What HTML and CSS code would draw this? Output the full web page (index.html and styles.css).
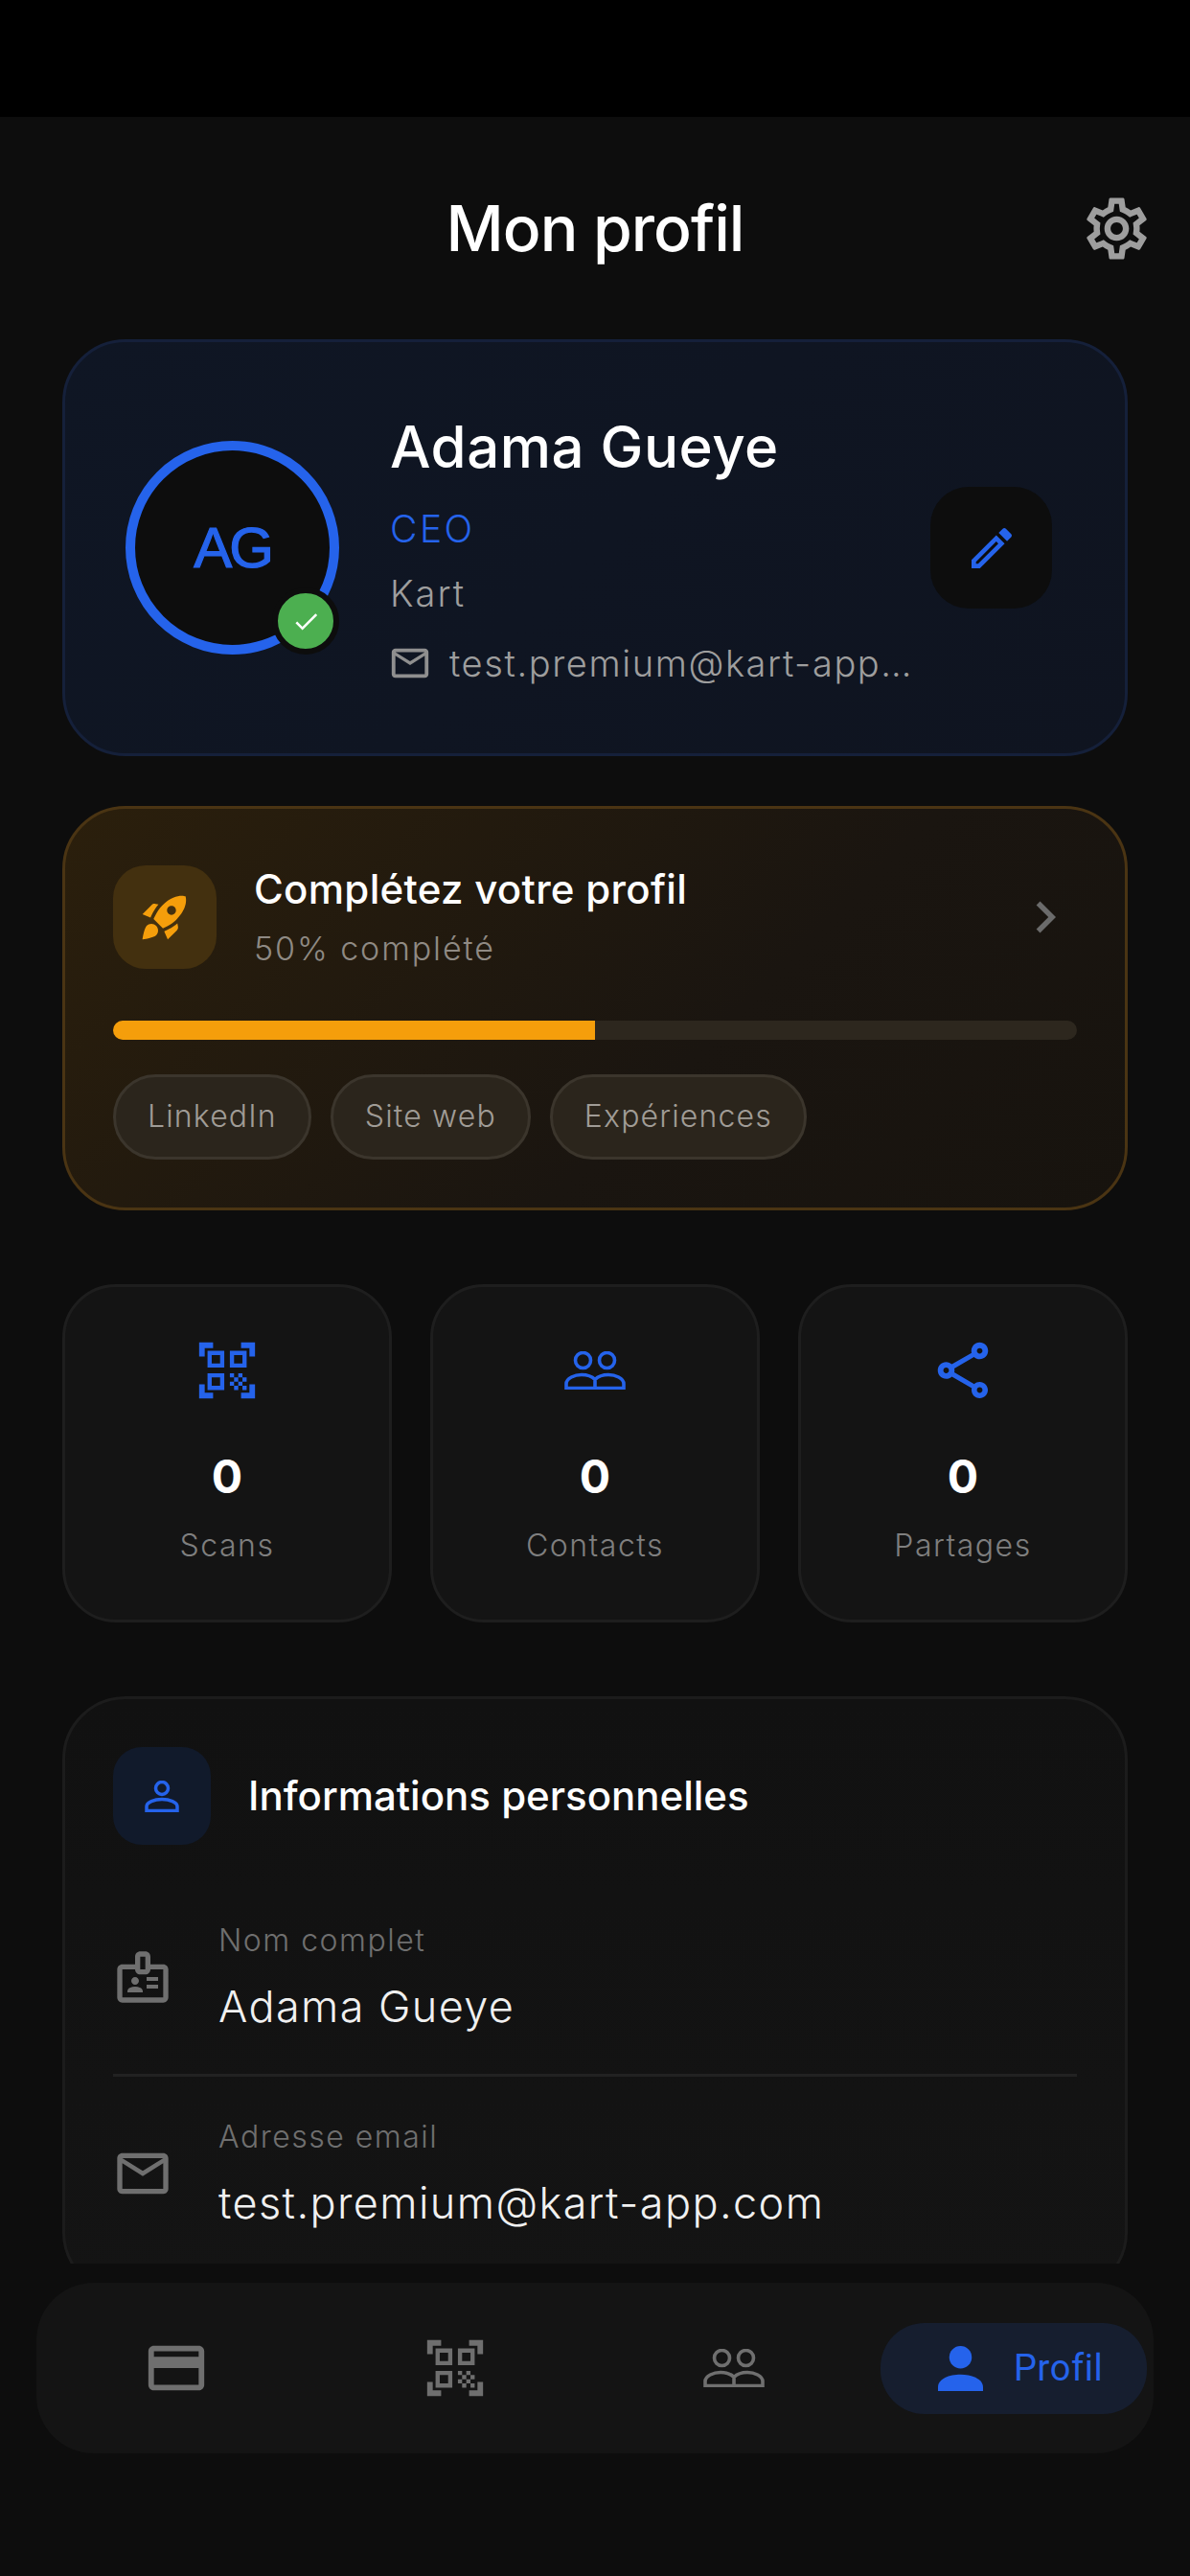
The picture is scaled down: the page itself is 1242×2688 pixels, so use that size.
FILE: index.html
```html
<!DOCTYPE html>
<html lang="fr">
<head>
<meta charset="utf-8">
<title>Mon profil</title>
<link rel="stylesheet" href="styles.css">
</head>
<body>
<div class="app">
  <div class="status"></div>
  <main class="main">
    <header class="header">
      <h1 class="title">Mon profil</h1>
      <svg class="gear" viewBox="0 0 24 24"><path d="M19.43 12.98c.04-.32.07-.64.07-.98 0-.34-.03-.66-.07-.98l2.11-1.65c.19-.15.24-.42.12-.64l-2-3.46c-.09-.16-.26-.25-.44-.25-.06 0-.12.01-.17.03l-2.49 1c-.52-.4-1.08-.73-1.69-.98l-.38-2.65C14.46 2.18 14.25 2 14 2h-4c-.25 0-.46.18-.49.42l-.38 2.65c-.61.25-1.17.59-1.69.98l-2.49-1c-.06-.02-.12-.03-.18-.03-.17 0-.34.09-.43.25l-2 3.46c-.13.22-.07.49.12.64l2.11 1.65c-.04.32-.07.65-.07.98 0 .33.03.66.07.98l-2.11 1.65c-.19.15-.24.42-.12.64l2 3.46c.09.16.26.25.44.25.06 0 .12-.01.17-.03l2.49-1c.52.4 1.08.73 1.69.98l.38 2.65c.03.24.24.42.49.42h4c.25 0 .46-.18.49-.42l.38-2.65c.61-.25 1.17-.59 1.69-.98l2.49 1c.06.02.12.03.18.03.17 0 .34-.09.43-.25l2-3.46c.12-.22.07-.49-.12-.64l-2.11-1.65zm-1.98-1.71c.04.31.05.52.05.73 0 .21-.02.43-.05.73l-.14 1.13.89.7 1.08.84-.7 1.21-1.27-.51-1.04-.42-.9.68c-.43.32-.84.56-1.25.73l-1.06.43-.16 1.13-.2 1.35h-1.4l-.19-1.35-.16-1.13-1.06-.43c-.43-.18-.83-.41-1.23-.71l-.91-.7-1.06.43-1.27.51-.7-1.21 1.08-.84.89-.7-.14-1.13c-.03-.31-.05-.54-.05-.74s.02-.43.05-.73l.14-1.13-.89-.7-1.08-.84.7-1.21 1.27.51 1.04.42.9-.68c.43-.32.84-.56 1.25-.73l1.06-.43.16-1.13.2-1.35h1.39l.19 1.35.16 1.13 1.06.43c.43.18.83.41 1.23.71l.91.7 1.06-.43 1.27-.51.7 1.21-1.07.85-.89.7.14 1.13zM12 8c-2.21 0-4 1.79-4 4s1.79 4 4 4 4-1.79 4-4-1.79-4-4-4zm0 6c-1.1 0-2-.9-2-2s.9-2 2-2 2 .9 2 2-.9 2-2 2z"/></svg>
    </header>

    <section class="card card-profile">
      <div class="avatar">
        <span class="avatar-text">AG</span>
        <span class="verified"><svg class="check" viewBox="0 0 24 24"><path d="M9 16.17L4.83 12l-1.42 1.41L9 19 21 7l-1.41-1.41z"/></svg></span>
      </div>
      <div class="profile-info">
        <div class="profile-name">Adama Gueye</div>
        <div class="profile-role">CEO</div>
        <div class="profile-company">Kart</div>
        <div class="profile-mail">
          <svg class="mail-small" viewBox="0 0 24 24"><path d="M22 6c0-1.1-.9-2-2-2H4c-1.1 0-2 .9-2 2v12c0 1.1.9 2 2 2h16c1.1 0 2-.9 2-2V6zm-2 0l-8 5-8-5h16zm0 12H4V8l8 5 8-5v10z"/></svg>
          <span class="mail-text">test.premium@kart-app…</span>
        </div>
      </div>
      <div class="edit">
        <svg class="edit-icon" viewBox="0 0 24 24"><path d="M14.06 9.02l.92.92L5.92 19H5v-.92l9.06-9.06M17.66 3c-.25 0-.51.1-.7.29l-1.83 1.83 3.75 3.75 1.83-1.83c.39-.39.39-1.02 0-1.41l-2.34-2.34c-.2-.2-.45-.29-.71-.29zm-3.6 3.19L3 17.25V21h3.75L17.81 9.94l-3.75-3.75z"/></svg>
      </div>
    </section>

    <section class="card card-progress">
      <div class="progress-head">
        <div class="rocket-box">
          <svg class="rocket" viewBox="0 0 24 24"><path d="M9.19 6.35c-2.04 2.29-3.44 5.58-3.57 5.89L2 10.69l4.05-4.05c.47-.47 1.15-.68 1.81-.55l1.33.26zM11.17 17s3.74-1.55 5.89-3.7c5.4-5.4 4.5-9.62 4.21-10.57-.95-.3-5.17-1.19-10.57 4.21C8.55 9.09 7 12.83 7 12.83L11.17 17zm6.48-2.19c-2.29 2.04-5.58 3.44-5.89 3.57L13.31 22l4.05-4.05c.47-.47.68-1.15.55-1.81l-.26-1.33zM9 18c0 .83-.34 1.58-.88 2.12C6.94 21.3 2 22 2 22s.7-4.94 1.88-6.12C4.42 15.34 5.17 15 6 15c1.66 0 3 1.34 3 3zm4-9c0-1.1.9-2 2-2s2 .9 2 2-.9 2-2 2-2-.9-2-2z" fill-rule="evenodd"/></svg>
        </div>
        <div class="progress-text">
          <div class="progress-title">Complétez votre profil</div>
          <div class="progress-sub">50% complété</div>
        </div>
        <svg class="chevron" viewBox="0 0 24 24"><path d="M10 6L8.59 7.41 13.17 12l-4.58 4.59L10 18l6-6z"/></svg>
      </div>
      <div class="bar"><div class="bar-fill"></div></div>
      <div class="chips">
        <span class="chip">LinkedIn</span>
        <span class="chip">Site web</span>
        <span class="chip">Expériences</span>
      </div>
    </section>

    <section class="stats">
      <div class="stat">
        <svg class="stat-icon" viewBox="0 0 24 24"><path d="M9.5 6.5v3h-3v-3h3M11 5H5v6h6V5zm-1.5 9.5v3h-3v-3h3M11 13H5v6h6v-6zm6.5-6.5v3h-3v-3h3M19 5h-6v6h6V5zm-6 8h1.5v1.5H13V13zm1.5 1.5H16V16h-1.5v-1.5zM16 13h1.5v1.5H16V13zm-3 3h1.5v1.5H13V16zm1.5 1.5H16V19h-1.5v-1.5zM16 16h1.5v1.5H16V16zm1.5-1.5H19V16h-1.5v-1.5zm0 3H19V19h-1.5v-1.5zM22 7h-2V4h-3V2h5v5zm0 15v-5h-2v3h-3v2h5zM2 22h5v-2H4v-3H2v5zM2 2v5h2V4h3V2H2z"/></svg>
        <div class="stat-value">0</div>
        <div class="stat-label">Scans</div>
      </div>
      <div class="stat">
        <span class="stat-slot"><svg class="people" viewBox="0 0 64 40"><circle cx="19.5" cy="9.5" r="8"/><circle cx="44.5" cy="9.5" r="8"/><path d="M2 38.5H62V34C62 28 53 24.5 46 24.5C40 24.5 35 26.5 32 29.5C29 26.5 24 24.5 18 24.5C11 24.5 2 28 2 34ZM32 29.5V38.5"/></svg></span>
        <div class="stat-value">0</div>
        <div class="stat-label">Contacts</div>
      </div>
      <div class="stat">
        <svg class="stat-icon" viewBox="0 0 24 24"><path d="M18 16.08c-.76 0-1.44.3-1.96.77L8.91 12.7c.05-.23.09-.46.09-.7s-.04-.47-.09-.7l7.05-4.11c.54.5 1.25.81 2.04.81 1.66 0 3-1.34 3-3s-1.34-3-3-3-3 1.34-3 3c0 .24.04.47.09.7L8.04 9.81C7.5 9.31 6.79 9 6 9c-1.66 0-3 1.34-3 3s1.34 3 3 3c.79 0 1.5-.31 2.04-.81l7.12 4.16c-.05.21-.08.43-.08.65 0 1.61 1.31 2.92 2.92 2.92 1.61 0 2.92-1.31 2.92-2.92s-1.31-2.92-2.92-2.92zM18 4c.55 0 1 .45 1 1s-.45 1-1 1-1-.45-1-1 .45-1 1-1zM6 13c-.55 0-1-.45-1-1s.45-1 1-1 1 .45 1 1-.45 1-1 1zm12 7.02c-.55 0-1-.45-1-1s.45-1 1-1 1 .45 1 1-.45 1-1 1z"/></svg>
        <div class="stat-value">0</div>
        <div class="stat-label">Partages</div>
      </div>
    </section>

    <section class="card card-info">
      <div class="info-head">
        <div class="info-box">
          <svg class="person-outline" viewBox="0 0 36 33"><ellipse cx="18" cy="8" rx="6.5" ry="6.5"/><path d="M2 31.5V27C2 22.5 10 19.5 18 19.5C26 19.5 34 22.5 34 27V31.5Z"/></svg>
        </div>
        <h2 class="info-title">Informations personnelles</h2>
      </div>
      <div class="row">
        <svg class="row-icon" viewBox="0 0 24 24"><path d="M20 7h-5V4c0-1.1-.9-2-2-2h-2c-1.1 0-2 .9-2 2v3H4c-1.1 0-2 .9-2 2v11c0 1.1.9 2 2 2h16c1.1 0 2-.9 2-2V9c0-1.1-.9-2-2-2zM11 4h2v5h-2V4zm9 16H4V9h5c0 1.1.9 2 2 2h2c1.1 0 2-.9 2-2h5v11zm-11-5c.83 0 1.5-.67 1.5-1.5S9.83 12 9 12s-1.5.67-1.5 1.5S8.17 15 9 15zm2.08 1.18c-.64-.28-1.34-.43-2.08-.43s-1.44.15-2.08.43C6.36 16.42 6 16.96 6 17.57V18h6v-.43c0-.61-.36-1.15-.92-1.39zM13.5 12H18v1.5h-4.5zm0 3H18v1.5h-4.5z"/></svg>
        <div class="row-text">
          <div class="row-label">Nom complet</div>
          <div class="row-value">Adama Gueye</div>
        </div>
      </div>
      <div class="divider"></div>
      <div class="row">
        <svg class="row-icon" viewBox="0 0 24 24"><path d="M22 6c0-1.1-.9-2-2-2H4c-1.1 0-2 .9-2 2v12c0 1.1.9 2 2 2h16c1.1 0 2-.9 2-2V6zm-2 0l-8 5-8-5h16zm0 12H4V8l8 5 8-5v10z"/></svg>
        <div class="row-text">
          <div class="row-label">Adresse email</div>
          <div class="row-value">test.premium@kart-app.com</div>
        </div>
      </div>
    </section>
  </main>

  <footer class="footer">
    <nav class="nav">
      <div class="nav-item">
        <svg class="nav-icon" viewBox="0 0 24 24"><path d="M20 4H4c-1.11 0-1.99.89-1.99 2L2 18c0 1.11.89 2 2 2h16c1.11 0 2-.89 2-2V6c0-1.11-.89-2-2-2zm0 14H4v-6h16v6zm0-10H4V6h16v2z"/></svg>
      </div>
      <div class="nav-item">
        <svg class="nav-icon" viewBox="0 0 24 24"><path d="M9.5 6.5v3h-3v-3h3M11 5H5v6h6V5zm-1.5 9.5v3h-3v-3h3M11 13H5v6h6v-6zm6.5-6.5v3h-3v-3h3M19 5h-6v6h6V5zm-6 8h1.5v1.5H13V13zm1.5 1.5H16V16h-1.5v-1.5zM16 13h1.5v1.5H16V13zm-3 3h1.5v1.5H13V16zm1.5 1.5H16V19h-1.5v-1.5zM16 16h1.5v1.5H16V16zm1.5-1.5H19V16h-1.5v-1.5zm0 3H19V19h-1.5v-1.5zM22 7h-2V4h-3V2h5v5zm0 15v-5h-2v3h-3v2h5zM2 22h5v-2H4v-3H2v5zM2 2v5h2V4h3V2H2z"/></svg>
      </div>
      <div class="nav-item">
        <svg class="people people-nav" viewBox="0 0 64 40"><circle cx="19.5" cy="9.5" r="8"/><circle cx="44.5" cy="9.5" r="8"/><path d="M2 38.5H62V34C62 28 53 24.5 46 24.5C40 24.5 35 26.5 32 29.5C29 26.5 24 24.5 18 24.5C11 24.5 2 28 2 34ZM32 29.5V38.5"/></svg>
      </div>
      <div class="nav-active">
        <svg class="person-fill" viewBox="0 0 48 48"><circle cx="24" cy="12" r="12"/><path d="M0 48V44C0 35 12 30.500 24 30.500C36 30.500 48 35 48 44V48Z"/></svg>
        <span class="nav-label">Profil</span>
      </div>
    </nav>
  </footer>
</div>
</body>
</html>
```

FILE: styles.css
```css
* { box-sizing: border-box; }
html, body { margin: 0; padding: 0; background: #0d0d0d; }
body { font-family: "Inter", "Liberation Sans", sans-serif; color: #fff; }
.app { width: 1242px; height: 2688px; display: flex; flex-direction: column; overflow: hidden; background: #0d0d0d; }
.status { height: 122px; flex: none; background: #000; }
.main { height: 2240px; flex: none; overflow: hidden; padding: 0 65px; position: relative; }

.header { height: 232px; display: flex; align-items: center; justify-content: center; position: relative; }
.title { margin: 0; font-size: 66px; font-weight: 500; line-height: 1; letter-spacing: -1px; color: #fff; }
.gear { position: absolute; right: -27px; top: 78px; width: 77px; height: 77px; fill: #9e9e9e; }

.card { border-radius: 66px; border: 3px solid; }
.card-profile { height: 435px; display: flex; align-items: center; padding: 0 76px 0 63px; background: linear-gradient(135deg, #0f1624, #0f1420); border-color: #15203a; }
.avatar { width: 223px; height: 223px; flex: none; border-radius: 50%; border: 10px solid #2563eb; background: #0d0d0d; position: relative; display: flex; align-items: center; justify-content: center; }
.avatar-text { font-size: 60px; font-weight: 400; letter-spacing: -3px; color: #2563eb; -webkit-text-stroke: 1.2px #2563eb; font-family: "Liberation Sans", sans-serif; }
.verified { position: absolute; right: -10px; bottom: -10px; width: 70px; height: 70px; border-radius: 50%; background: #4caf50; border: 6px solid #0d0d0d; display: flex; align-items: center; justify-content: center; }
.check { width: 31px; height: 31px; fill: #fff; }
.profile-info { flex: 1; margin-left: 53px; }
.profile-name { font-size: 60px; font-weight: 500; line-height: 76px; letter-spacing: .5px; color: #fff; }
.profile-role { font-size: 39px; font-weight: 300; line-height: 50px; margin-top: 23px; color: #2563eb; letter-spacing: 2.5px; }
.profile-company { font-size: 38px; font-weight: 300; line-height: 48px; margin-top: 18px; color: #9e9e9e; letter-spacing: 2px; }
.profile-mail { display: flex; align-items: center; margin-top: 25px; line-height: 48px; margin-left: -2px; }
.mail-small { width: 46px; height: 46px; fill: #8f8f8f; flex: none; }
.mail-text { font-size: 38px; font-weight: 300; letter-spacing: 1.6px; color: #9e9e9e; margin-left: 18px; white-space: nowrap; }
.edit { width: 127px; height: 127px; flex: none; border-radius: 40px; background: #0d0d0d; display: flex; align-items: center; justify-content: center; }
.edit-icon { width: 56px; height: 56px; fill: #2563eb; }

.card-progress { margin-top: 52px; height: 422px; padding: 58px 50px 0; background: linear-gradient(135deg, #2b1f0c, #1a1510 60%, #17130e); border-color: #4a3413; }
.progress-head { display: flex; align-items: center; }
.rocket-box { width: 108px; height: 108px; flex: none; border-radius: 34px; background: #43300f; display: flex; align-items: center; justify-content: center; }
.rocket { width: 56px; height: 56px; fill: #f59e0b; }
.progress-text { flex: 1; margin-left: 39px; }
.progress-title { font-size: 42px; font-weight: 500; line-height: 52px; letter-spacing: .3px; color: #fff; }
.progress-sub { font-size: 34px; font-weight: 300; line-height: 44px; letter-spacing: 1.9px; margin-top: 14px; color: #8f8a84; }
.chevron { width: 66px; height: 66px; fill: #6b6b6b; }
.bar { height: 20px; margin-top: 53px; border-radius: 10px; background: #2d271e; overflow: hidden; }
.bar-fill { width: 50%; height: 100%; background: #f59e0b; }
.chips { display: flex; gap: 20px; margin-top: 36px; }
.chip { height: 89px; padding: 0 33px 3px; border-radius: 45px; background: #2b251c; border: 3px solid #3b352c; display: flex; align-items: center; font-size: 32px; font-weight: 300; letter-spacing: 1.15px; color: #a09c96; }

.stats { margin-top: 77px; display: grid; grid-template-columns: repeat(3, 344px); justify-content: space-between; }
.stat { height: 353px; border-radius: 56px; background: #141414; border: 3px solid #1e1e1e; display: flex; flex-direction: column; align-items: center; padding-top: 52px; }
.stat-icon { width: 70px; height: 70px; fill: #2563eb; display: block; }
.stat-slot { width: 70px; height: 70px; display: flex; align-items: center; justify-content: center; }
.people { width: 64px; height: 40px; fill: none; stroke: #2563eb; stroke-width: 3.6; }
.people-nav { stroke: #6f6f6f; }
.stat-value { font-size: 48px; font-weight: 700; line-height: 60px; margin-top: 46px; color: #fff; }
.stat-label { font-size: 32px; font-weight: 300; line-height: 44px; letter-spacing: 1.5px; margin-top: 20px; color: #7f7f7f; }

.card-info { margin-top: 77px; padding: 50px 50px 65px; background: linear-gradient(180deg, #111, #141414); border-color: #1c1c1c; }
.info-head { display: flex; align-items: center; }
.info-box { width: 102px; height: 102px; flex: none; border-radius: 30px; background: #111a2b; display: flex; align-items: center; justify-content: center; }
.person-outline { width: 36px; height: 33px; fill: none; stroke: #2563eb; stroke-width: 3.5; }
.info-title { margin: 0 0 0 39px; font-size: 42px; font-weight: 500; line-height: 52px; color: #fff; }
.row { display: flex; align-items: center; height: 119px; }
.info-head + .row { margin-top: 78px; }
.row-icon { width: 64px; height: 64px; flex: none; fill: #6f6f6f; margin-left: -1px; }
.row-text { margin-left: 47px; }
.row-label { font-size: 32px; font-weight: 300; line-height: 44px; letter-spacing: 1.5px; color: #6f6f6f; }
.row-value { font-size: 45px; font-weight: 300; line-height: 56px; letter-spacing: 1.4px; margin-top: 19px; color: #f0f0f0; }
.divider { height: 3px; background: #222; margin: 42px 0 41px; }

.footer { flex: 1; padding: 20px 38px 0; background: #0d0d0d; position: relative; }
.nav { height: 178px; border-radius: 60px; background: #141414; display: flex; align-items: center; justify-content: space-between; padding-right: 7px; }
.nav-item { width: 291px; display: flex; align-items: center; justify-content: center; }
.nav-icon { width: 70px; height: 70px; fill: #6f6f6f; }
.nav-active { width: 278px; height: 95px; margin-left: 8px; border-radius: 46px; background: #161e2f; display: flex; align-items: center; padding-left: 60px; }
.person-fill { width: 47px; height: 47px; fill: #2563eb; flex: none; }
.nav-label { font-size: 38px; font-weight: 400; letter-spacing: .6px; color: #2563eb; margin-left: 32px; font-family: "Roboto", sans-serif; }
```
